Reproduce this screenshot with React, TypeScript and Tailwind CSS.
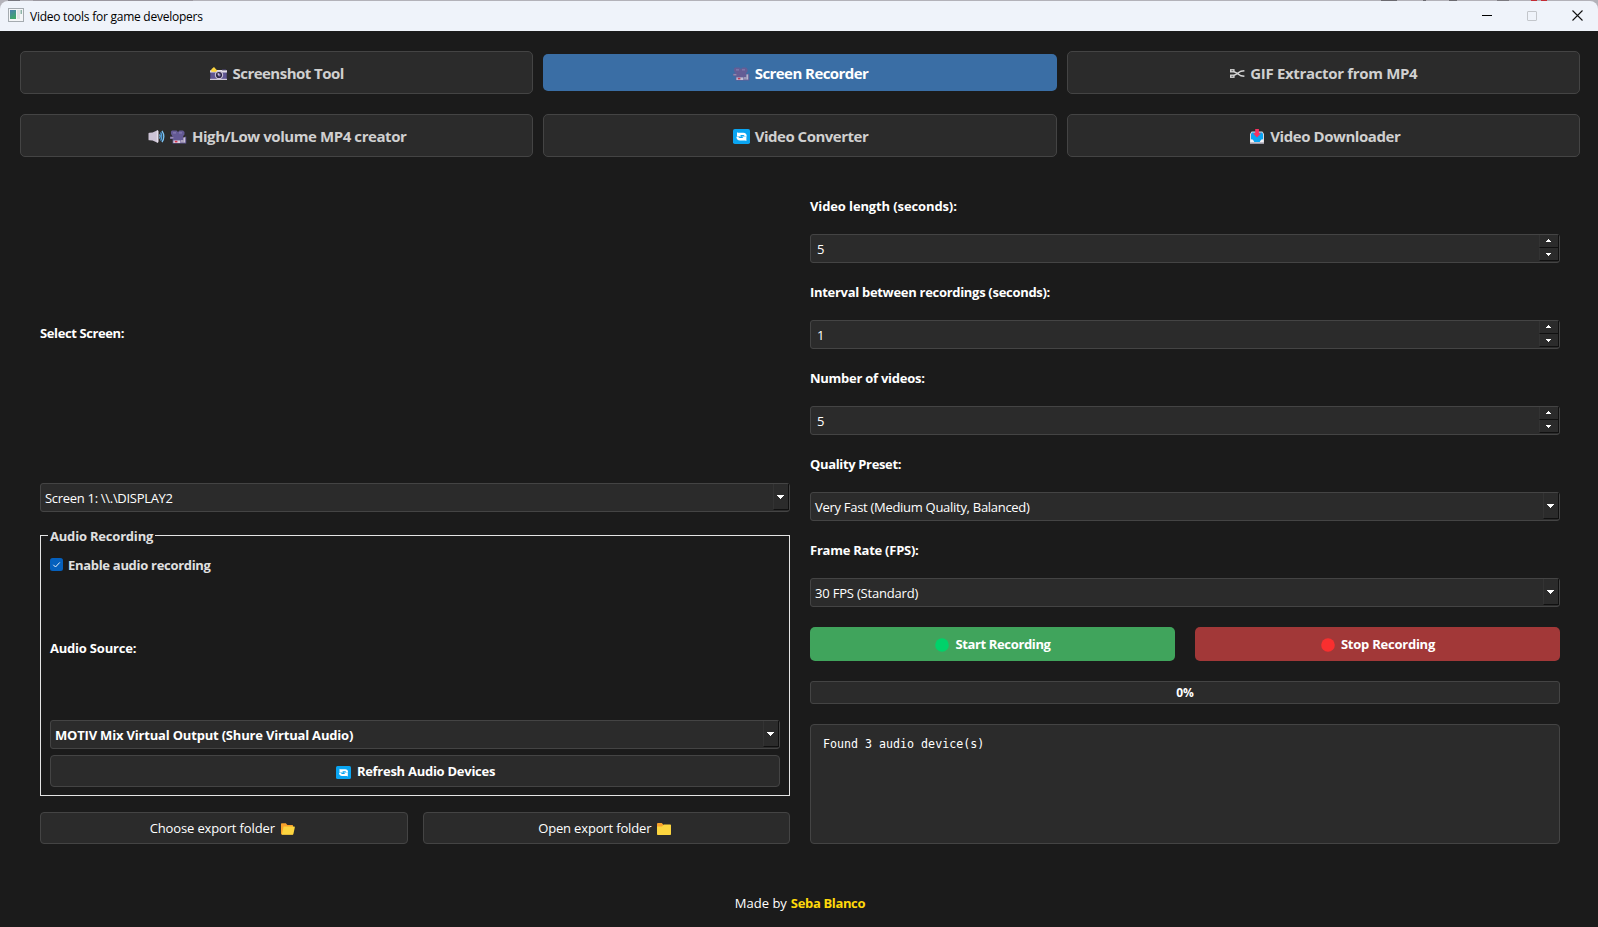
import type { ReactNode } from "react";

const Camera = () => (
  <svg width="17" height="13" viewBox="0 0 17 13">
    <rect x="0.3" y="3" width="16.4" height="10" rx="1" fill="#5f5591" />
    <path d="M0 5.5V4.2Q0 3 1.2 3H15.8Q17 3 17 4.2V5.5Z" fill="#e4dfe8" />
    <rect x="12" y="2" width="4" height="1.4" fill="#3f3a55" />
    <rect x="0" y="11.8" width="17" height="1.2" fill="#cfc8d8" />
    <path d="M4 0L6 2.2L7.4 3.4L5.6 5L1 4.4L1.4 2.2Z" fill="#fcd53f" />
    <circle cx="9" cy="8" r="4.2" fill="#cdc4d6" />
    <circle cx="9" cy="8" r="3.1" fill="#2f2a48" />
    <circle cx="9.2" cy="8" r="1.4" fill="#8d82b8" />
    <circle cx="8.2" cy="7" r="0.7" fill="#fff" />
  </svg>
);

const Projector = ({ faded = false }: { faded?: boolean }) => (
  <svg width="17" height="14" viewBox="0 0 17 14" className={faded ? "opacity-85" : ""}>
    <path d="M2 0.5H6.5L8 2L9.5 0.5H13L14.5 2V4.6L13.2 6V8L15.8 6.4H16.2V13.4H2.6V9H0V6.6H2.6L1 4V1.6Z" fill={faded ? "#6c5b93" : "#635994"} />
    <rect x="3" y="2.4" width="3" height="1" fill={faded ? "#9a86b5" : "#8f84b8"} />
    <rect x="9" y="2.4" width="3" height="1" fill={faded ? "#9a86b5" : "#8f84b8"} />
    <rect x="0.4" y="7.2" width="3" height="1.1" fill="#a99db9" />
    <rect x="3.4" y="10.4" width="7" height="2.6" fill="#d9d0e0" />
    <rect x="4.8" y="10.8" width="2.6" height="1.6" fill="#d8324a" />
    <rect x="11" y="10" width="2.4" height="2.6" fill="#aaa0bb" />
    <rect x="13.4" y="7.4" width="1.8" height="5.2" fill="#c9c1d4" />
  </svg>
);

const Speaker = () => (
  <svg width="17" height="13" viewBox="0 0 17 13">
    <path d="M0.5 3.6Q0.5 2.8 1.4 2.7L4.6 2.4L9 0.4Q10.2 0 10.2 1.2V11.8Q10.2 13 9 12.6L4.6 10.6L1.4 10.3Q0.5 10.2 0.5 9.4Z" fill="#cdc4d6" />
    <path d="M8.8 0.6Q10.4 0 10.4 1.4V11.6Q10.4 13 8.8 12.4Z" fill="#e6dfea" />
    <path d="M11.6 4.4Q13 6.5 11.6 8.6" fill="none" stroke="#7cc4f4" strokeWidth="1.3" />
    <path d="M12.6 2.4Q15 6.5 12.6 10.6" fill="none" stroke="#4a9fe0" strokeWidth="1.3" />
    <path d="M14 0.8Q17.6 6.5 14 12.2" fill="none" stroke="#7cc4f4" strokeWidth="1.3" />
  </svg>
);

const Refresh = ({ w, h }: { w: number; h: number }) => (
  <svg width={w} height={h} viewBox="0 0 17 15" preserveAspectRatio="none">
    <rect width="17" height="15" rx="1.8" fill="#0aa5f2" />
    <path d="M4 3.2V7.6H8.6L7 6.1H10.2Q11.4 6.1 11.6 7.4H13.8Q13.6 3.8 10.4 3.8H5Z" fill="#fff" />
    <path d="M13.4 12V7.6H8.8L10.4 9.1H7Q5.6 9.1 5.4 7.8H3.4Q3.4 11.4 7 11.4H12.2Z" fill="#fff" />
  </svg>
);

const Scissors = () => (
  <svg width="15" height="9" viewBox="0 0 15 9" fill="none" stroke="#d4d4d4">
    <rect x="0.7" y="0.8" width="3.2" height="2" strokeWidth="1.4" />
    <rect x="0.7" y="6.2" width="3.2" height="2" strokeWidth="1.4" />
    <path d="M4 2.6L7.4 4.4L11 2.2L14.4 1.7M4 6.4L7.4 4.6L11 6.8L14.4 7.3" strokeWidth="1.4" />
  </svg>
);

const Inbox = () => (
  <svg width="14" height="15" viewBox="0 0 14 15">
    <path d="M1.6 2.6H12.4L14 5V13.8Q14 15 12.8 15H1.2Q0 15 0 13.8V5Z" fill="#d9d6de" />
    <path d="M2 3.6H12L13 5V10.4L11 11L9.8 13H4.2L3 11L1 10.4V5Z" fill="#0aa5f2" />
    <path d="M0.5 10.6H2.6L4.2 12.9H9.8L11.4 10.6H13.5V13.4H0.5Z" fill="#f4f2f6" />
    <path d="M0 13.4H14V14Q14 15 12.8 15H1.2Q0 15 0 14Z" fill="#9d99a6" />
    <path d="M5.2 0H8.9V4.2H11L7 8.4L3 4.2H5.2Z" fill="#f8315f" />
  </svg>
);

const FolderOpen = () => (
  <svg width="14" height="12" viewBox="0 0 14 12">
    <path d="M0 1Q0 0.3 0.8 0.3H4.8L6.4 2H11.4Q12 2 12 2.8V11.5H0.8Q0 11.5 0 10.7Z" fill="#f9a22b" />
    <path d="M2.6 3.6H13.2Q14 3.6 13.8 4.4L12.4 11Q12.2 11.7 11.5 11.7H0.8Z" fill="#fcd53f" />
  </svg>
);

const Folder = () => (
  <svg width="14" height="12" viewBox="0 0 14 12">
    <path d="M0 0.9Q0 0 0.9 0H4.8L7 2.4V5H0Z" fill="#f9a22b" />
    <path d="M0 3.4H5L6.8 1.4H13.2Q14 1.4 14 2.2V11.2Q14 12 13.2 12H0.8Q0 12 0 11.2Z" fill="#fcd53f" />
  </svg>
);

const ArrowDown = () => (
  <svg width="7" height="4" viewBox="0 0 7 4" shapeRendering="crispEdges" fill="#fff">
    <path d="M0 0H7V1H6V2H5V3H4V4H3V3H2V2H1V1H0Z" />
  </svg>
);

const Tab = ({ icon, children, active = false }: { icon: ReactNode; children: ReactNode; active?: boolean }) => (
  <button
    className={
      active
        ? "my-[3px] flex items-center justify-center gap-[5px] rounded-[5px] bg-[#3a6ea5] pl-px text-[15px] font-bold text-white"
        : "flex items-center justify-center gap-[5px] rounded-[5px] border border-[#444] bg-[#2b2b2b] pl-px text-[15px] font-bold text-[#d0d0d0]"
    }
  >
    <span className="flex gap-[5px] pt-[2px]">{icon}</span>
    {children}
  </button>
);

const Label = ({ children }: { children: ReactNode }) => (
  <div className="mb-5 h-[17px] font-bold leading-[18px] text-white">{children}</div>
);

const Combo = ({ children }: { children: ReactNode }) => (
  <div className="flex h-[29px] shrink-0 items-start justify-between rounded-[3px] border border-[#444] bg-[#2b2b2b] pl-[4px] leading-[29px] text-white">
    {children}
    <div className="flex h-[26px] w-[16px] items-center justify-center border-b border-l border-r border-b-[#101010] border-l-[#333] border-r-[#101010] pr-px pt-px">
      <ArrowDown />
    </div>
  </div>
);

const Spin = ({ value }: { value: number }) => (
  <div className="flex h-[29px] items-start justify-between rounded-[3px] border border-[#444] bg-[#2b2b2b] pl-[6px] leading-[29px] text-white">
    <span>{value}</span>
    <div className="flex w-[20px] flex-col">
      <div className="flex h-[13px] items-center justify-center border-b border-l border-r border-b-[#101010] border-l-[#333] border-r-[#101010] pb-px pr-px">
        <svg width="5" height="3" viewBox="0 0 5 3" shapeRendering="crispEdges" fill="#fff">
          <path d="M2 0H3V1H4V2H5V3H0V2H1V1H2Z" />
        </svg>
      </div>
      <div className="flex h-[13px] items-center justify-center border-b border-l border-r border-b-[#101010] border-l-[#333] border-r-[#101010] pr-px">
        <svg width="5" height="3" viewBox="0 0 5 3" shapeRendering="crispEdges" fill="#fff">
          <path d="M0 0H5V1H4V2H3V3H2V2H1V1H0Z" />
        </svg>
      </div>
    </div>
  </div>
);

const TitleBar = () => (
  <header className="bg-[#b3b2b9]">
    <svg width="1598" height="1" className="block" shapeRendering="crispEdges">
      <rect x="8" width="12" height="1" fill="#77767e" />
      <rect x="33" width="160" height="1" fill="#9b98a0" />
      <rect x="1381" width="16" height="1" fill="#6c6a70" />
      <rect x="1423" width="3" height="1" fill="#6c6a70" />
      <rect x="1449" width="8" height="1" fill="#6c6a70" />
      <rect x="1497" width="12" height="1" fill="#7c7a80" />
      <rect x="1531" width="6" height="1" fill="#c42b35" />
      <rect x="1541" width="6" height="1" fill="#c42b35" />
    </svg>
    <div className="flex h-[30px] items-center rounded-t-lg bg-[#eff3fa] pl-2 pr-[15px]">
      <svg width="16" height="14" viewBox="0 0 16 14" className="mb-[2px] shrink-0">
        <defs>
          <linearGradient id="pane" x1="0" y1="0" x2="0.4" y2="1">
            <stop offset="0" stopColor="#4b7fb0" />
            <stop offset="1" stopColor="#3fa66b" />
          </linearGradient>
        </defs>
        <rect x="0.5" y="0.5" width="15" height="13" fill="#f4f6f8" stroke="#a5abb0" />
        <rect x="2" y="2" width="6" height="9" fill="url(#pane)" />
        <rect x="9" y="2" width="3" height="9" fill="#dfe3e4" />
        <rect x="12.5" y="2" width="1.5" height="4" fill="#8fb5a8" />
      </svg>
      <span className="ml-[6px] flex-1 pt-px text-[12px] leading-[18px] tracking-[-0.25px] text-black">Video tools for game developers</span>
      <div className="flex items-center gap-[35px] pb-px">
        <svg width="10" height="11" shapeRendering="crispEdges"><rect y="5" width="10" height="1" fill="#000" /></svg>
        <svg width="10" height="10"><rect x="0.5" y="0.5" width="9" height="9" rx="0.5" fill="none" stroke="#c3c6cb" /></svg>
        <svg width="11" height="11"><path d="M0.5 0.5L10.5 10.5M10.5 0.5L0.5 10.5" stroke="#111" strokeWidth="1.1" /></svg>
      </div>
    </div>
  </header>
);

export default function App() {
  return (
    <div className="flex h-[927px] w-[1598px] flex-col overflow-hidden bg-[#1b1b1b] font-['Open_Sans','Noto_Sans',sans-serif] text-[13px]">
      <TitleBar />
      <nav className="ml-5 mr-[18px] mt-5 grid grid-cols-3 grid-rows-[43px_43px] gap-x-[10px] gap-y-5 leading-[22px]">
        <Tab icon={<Camera />}><span className="tracking-[-0.52px]">Screenshot Tool</span></Tab>
        <Tab active icon={<Projector faded />}><span className="tracking-[-0.56px]">Screen Recorder</span></Tab>
        <Tab icon={<Scissors />}><span className="tracking-[-0.33px]">GIF Extractor from MP4</span></Tab>
        <Tab icon={<><Speaker /><Projector /></>}><span className="tracking-[-0.42px]">High/Low volume MP4 creator</span></Tab>
        <Tab icon={<Refresh w={17} h={15} />}><span className="tracking-[-0.5px]">Video Converter</span></Tab>
        <Tab icon={<Inbox />}><span className="-mr-[3px] ml-px tracking-[-0.44px]">Video Downloader</span></Tab>
      </nav>

      <main className="ml-10 mr-[38px] mt-10 grid h-[647px] grid-cols-2 gap-x-5">
        <section className="flex flex-col">
          <div className="flex h-[286px] items-center pb-[12px] font-bold text-white">
            <span className="tracking-[-0.39px]">Select Screen:</span>
          </div>
          <Combo><span className="tracking-[-0.3px]">Screen 1: \\.\DISPLAY2</span></Combo>

          <div className="relative mt-[23px] flex h-[261px] flex-col border border-[#e4e4e4] px-[9px] pb-2 font-bold">
            <span className="absolute -top-[9px] left-[7px] bg-[#1b1b1b] px-[2px] leading-[19px] tracking-[-0.2px] text-[#e0e0e0]">Audio Recording</span>
            <div className="mt-5 flex h-5 items-center gap-[5px] text-[#e0e0e0]">
              <svg width="13" height="13" className="mb-[3px]">
                <rect width="13" height="13" rx="2.5" fill="#0560bd" />
                <path d="M3.3 6.8L5.5 9L9.8 4.4" fill="none" stroke="#e8f0fa" strokeWidth="1" />
              </svg>
              <span className="tracking-[-0.3px]">Enable audio recording</span>
            </div>
            <div className="flex flex-1 items-center pt-px text-white">
              <span className="tracking-[-0.21px]">Audio Source:</span>
            </div>
            <Combo><span className="tracking-[-0.19px]">MOTIV Mix Virtual Output (Shure Virtual Audio)</span></Combo>
            <button className="mt-[6px] flex h-8 shrink-0 items-center justify-center gap-[6px] rounded-[4px] border border-[#444] bg-[#2b2b2b] pl-px pt-[2px] text-white">
              <Refresh w={15} h={13} />
              <span className="tracking-[-0.27px]">Refresh Audio Devices</span>
            </button>
          </div>

          <div className="mt-4 grid grid-cols-2 gap-x-[15px] text-white">
            <button className="flex h-8 items-center justify-center gap-[6px] rounded-[4px] border border-[#444] bg-[#2b2b2b] pr-[3px] pt-[2px]">
              <span className="tracking-[-0.14px]">Choose export folder</span><FolderOpen />
            </button>
            <button className="flex h-8 items-center justify-center gap-[6px] rounded-[4px] border border-[#444] bg-[#2b2b2b] pr-[3px] pt-[2px]">
              <span className="tracking-[-0.16px]">Open export folder</span><Folder />
            </button>
          </div>
        </section>

        <section className="flex flex-col">
          <Label><span className="tracking-[-0.12px]">Video length (seconds):</span></Label>
          <Spin value={5} />
          <div className="h-5" />
          <Label><span className="tracking-[-0.3px]">Interval between recordings (seconds):</span></Label>
          <Spin value={1} />
          <div className="h-5" />
          <Label><span className="tracking-[-0.26px]">Number of videos:</span></Label>
          <Spin value={5} />
          <div className="h-5" />
          <Label><span className="tracking-[-0.35px]">Quality Preset:</span></Label>
          <Combo><span className="tracking-[-0.29px]">Very Fast (Medium Quality, Balanced)</span></Combo>
          <div className="h-5" />
          <Label><span className="tracking-[-0.25px]">Frame Rate (FPS):</span></Label>
          <Combo><span className="tracking-[-0.19px]">30 FPS (Standard)</span></Combo>

          <div className="mt-5 grid grid-cols-2 gap-x-5 font-bold text-white">
            <button className="flex h-[34px] items-center justify-center gap-[6px] rounded-[5px] bg-[#40a45c] pl-px pt-[2px]">
              <svg width="14" height="14"><circle cx="7" cy="7" r="6.8" fill="#00d26a" /></svg>
              <span className="tracking-[-0.36px]">Start Recording</span>
            </button>
            <button className="flex h-[34px] items-center justify-center gap-[6px] rounded-[5px] bg-[#a23838] pl-px pt-[2px]">
              <svg width="14" height="14"><circle cx="7" cy="7" r="6.8" fill="#f92f2f" /></svg>
              <span className="tracking-[-0.24px]">Stop Recording</span>
            </button>
          </div>

          <div className="mt-5 flex h-[23px] items-center justify-center rounded-[3px] border border-[#444] bg-[#2b2b2b] pt-px text-[12px] font-bold text-white">0%</div>
          <div className="mt-5 h-[120px] rounded-[4px] border border-[#444] bg-[#2b2b2b] px-3 pt-[11px] font-['DejaVu_Sans_Mono',monospace] text-[11.65px] leading-4 text-white">
            Found 3 audio device(s)
          </div>
        </section>
      </main>

      <footer className="mt-[50px] flex justify-center gap-1 pl-[2px] leading-[19px] text-white">
        <span>Made by</span>
        <span className="font-bold tracking-[-0.35px] text-[#ffd90a]">Seba Blanco</span>
      </footer>
    </div>
  );
}
